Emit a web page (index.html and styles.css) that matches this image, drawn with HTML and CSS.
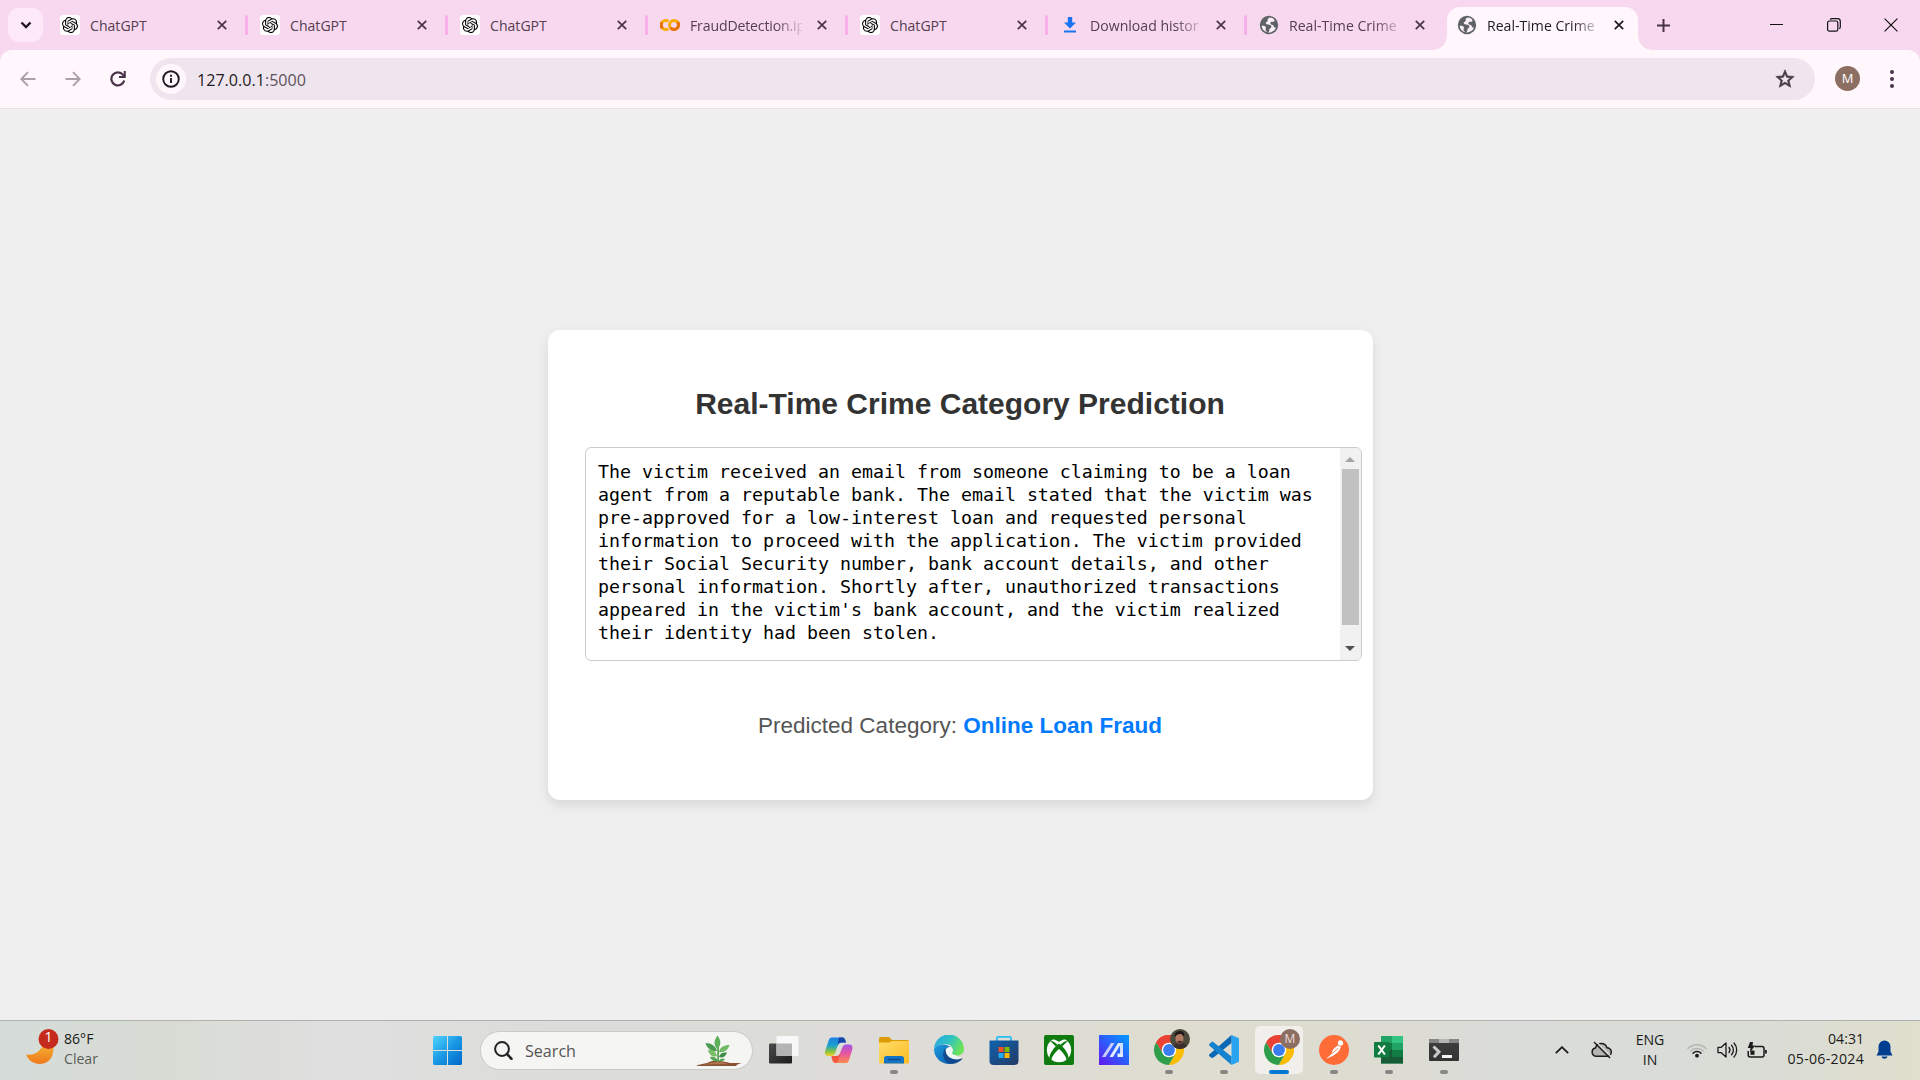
FILE: index.html
```html
<!DOCTYPE html>
<html lang="en">
<head>
<meta charset="utf-8">
<title>Real-Time Crime Category Prediction</title>
<link rel="stylesheet" href="styles.css">
</head>
<body>
<svg class="defs" width="0" height="0" aria-hidden="true">
  <defs>
    <linearGradient id="winG" x1="0" y1="0" x2="1" y2="1"><stop offset="0" stop-color="#4fd5fd"/><stop offset=".5" stop-color="#1a98e4"/><stop offset="1" stop-color="#0067c8"/></linearGradient>
    <linearGradient id="moonG" x1="0" y1="0" x2="0" y2="1"><stop offset="0" stop-color="#f3bb38"/><stop offset="1" stop-color="#ef7a1c"/></linearGradient>
    <linearGradient id="folderG" x1="0" y1="0" x2="1" y2="1"><stop offset="0" stop-color="#ffdc6b"/><stop offset="1" stop-color="#fcbc20"/></linearGradient>
    <linearGradient id="edgeTop" x1="0" y1="0" x2="1" y2=".4"><stop offset="0" stop-color="#2aa6e0"/><stop offset=".55" stop-color="#2fc3c4"/><stop offset="1" stop-color="#6be25c"/></linearGradient>
    <linearGradient id="edgeLow" x1="0" y1="0" x2="1" y2="1"><stop offset="0" stop-color="#1b9de2"/><stop offset="1" stop-color="#0d56a6"/></linearGradient>
    <linearGradient id="storeG" x1="0" y1="0" x2="1" y2="1"><stop offset="0" stop-color="#0f62ae"/><stop offset="1" stop-color="#253a66"/></linearGradient>
    <linearGradient id="asusG" x1="0" y1="1" x2="1" y2="0"><stop offset="0" stop-color="#6617ef"/><stop offset=".5" stop-color="#2c5cfb"/><stop offset="1" stop-color="#059cff"/></linearGradient>
    <linearGradient id="copA" x1="0" y1="0" x2="0" y2="1"><stop offset="0" stop-color="#1b7fe8"/><stop offset=".45" stop-color="#1ba3c8"/><stop offset=".75" stop-color="#84c341"/><stop offset="1" stop-color="#f5cf2b"/></linearGradient>
    <linearGradient id="copB" x1="0" y1="0" x2="0" y2="1"><stop offset="0" stop-color="#a553e5"/><stop offset=".5" stop-color="#e8579f"/><stop offset="1" stop-color="#fb8b4b"/></linearGradient>
    <linearGradient id="termG" x1="0" y1="0" x2="0" y2="1"><stop offset="0" stop-color="#3f3f3f"/><stop offset="1" stop-color="#333"/></linearGradient>
    <linearGradient id="viewG" x1="0" y1="0" x2="1" y2="1"><stop offset="0" stop-color="#4b4b4b"/><stop offset="1" stop-color="#1c1c1c"/></linearGradient>
  </defs>
  <symbol id="gpt" viewBox="0 0 24 24"><path d="M22.2819 9.8211a5.9847 5.9847 0 0 0-.5157-4.9108 6.0462 6.0462 0 0 0-6.5098-2.9A6.0651 6.0651 0 0 0 4.9807 4.1818a5.9847 5.9847 0 0 0-3.9977 2.9 6.0462 6.0462 0 0 0 .7427 7.0966 5.98 5.98 0 0 0 .511 4.9107 6.051 6.051 0 0 0 6.5146 2.9001A5.9847 5.9847 0 0 0 13.2599 24a6.0557 6.0557 0 0 0 5.7718-4.2058 5.9894 5.9894 0 0 0 3.9977-2.9001 6.0557 6.0557 0 0 0-.7475-7.0729zm-9.022 12.6081a4.4755 4.4755 0 0 1-2.8764-1.0408l.1419-.0804 4.7783-2.7582a.7948.7948 0 0 0 .3927-.6813v-6.7369l2.02 1.1686a.071.071 0 0 1 .038.052v5.5826a4.504 4.504 0 0 1-4.4945 4.4944zm-9.6607-4.1254a4.4708 4.4708 0 0 1-.5346-3.0137l.142.0852 4.783 2.7582a.7712.7712 0 0 0 .7806 0l5.8428-3.3685v2.3324a.0804.0804 0 0 1-.0332.0615L9.74 19.9502a4.4992 4.4992 0 0 1-6.1408-1.6464zM2.3408 7.8956a4.485 4.485 0 0 1 2.3655-1.9728V11.6a.7664.7664 0 0 0 .3879.6765l5.8144 3.3543-2.0201 1.1685a.0757.0757 0 0 1-.071 0l-4.8303-2.7865A4.504 4.504 0 0 1 2.3408 7.872zm16.5963 3.8558L13.1038 8.364 15.1192 7.2a.0757.0757 0 0 1 .071 0l4.8303 2.7913a4.4944 4.4944 0 0 1-.6765 8.1042v-5.6772a.79.79 0 0 0-.407-.667zm2.0107-3.0231l-.142-.0852-4.7735-2.7818a.7759.7759 0 0 0-.7854 0L9.409 9.2297V6.8974a.0662.0662 0 0 1 .0284-.0615l4.8303-2.7866a4.4992 4.4992 0 0 1 6.6802 4.66zM8.3065 12.863l-2.02-1.1638a.0804.0804 0 0 1-.038-.0567V6.0742a4.4992 4.4992 0 0 1 7.3757-3.4537l-.142.0805L8.704 5.459a.7948.7948 0 0 0-.3927.6813zm1.0976-2.3654l2.602-1.4998 2.6069 1.4998v2.9994l-2.5974 1.4997-2.6067-1.4997Z"/></symbol>
  <symbol id="x" viewBox="0 0 10 10"><path d="M.8.8 9.2 9.2M9.2.8.8 9.2" fill="none" stroke="currentColor" stroke-width="1.7"/></symbol>
  <symbol id="globe" viewBox="0 0 24 24"><path fill="#5f6368" d="M12 1a11 11 0 1 0 0 22 11 11 0 0 0 0-22z"/><path fill="#fbeff8" d="M13 3.1c-2 .6-3 1.8-2.600 3.300.4 1.300-.9 1.500-1.800 2.200-1 .8-.4 2.100.7 2.500 2.100.7 4.500.1 5.300 1.900.8 1.700-.5 2.600-1.500 3.300-.8.6-.5 2.200-1.100 3.600-.3.700-.9 1.100-1.500 1 4.600.6 8.400-1.800 9.900-5.500-1.500.2-2.800-.9-3-2.400-.2-1.300-1.700-1.200-2.800-1.700-1.600-.8-1-2.700.3-3.200 1.100-.4 2.300.2 3.200-.4.700-.5.200-1.700.2-2.400-1.300-1.200-3.200-2.100-5.300-2.200zM3.200 12.800c2.300-.1 4.500.3 5 1.900.4 1.400-.7 2.400-.2 3.700.3.900 1.400 1.100 1.500 2.200-3.400-1-6-4-6.300-7.800z"/></symbol>
  <symbol id="chrome" viewBox="0 0 30 30">
    <path fill="#ea4335" d="M2 7.500A15 15 0 0 1 28 7.500L15 8.200z"/>
    <path fill="#ea4335" d="M2 7.500 8.800 18.500 15 8H28.200A15 15 0 0 0 2 7.500z"/>
    <path fill="#fbbc04" d="M28 7.600A15 15 0 0 1 14.800 30L21.200 18.500 15 7.600z"/>
    <path fill="#2f9e4c" d="M2 7.500A15 15 0 0 0 14.800 30L21.300 18.600 9 18.600z"/>
    <circle cx="15" cy="15" r="7.300" fill="#fff"/><circle cx="15" cy="15" r="5.900" fill="#3b7df0"/>
  </symbol>
</svg>

<header class="browser">
  <div class="tabstrip">
    <button class="tabsearch"><svg width="12" height="8" viewBox="0 0 12 8"><path d="M1.500 1.500 6 6l4.500-4.500" fill="none" stroke="#1f1420" stroke-width="2.300"/></svg></button>
    <div class="tab"><span class="fav white"><svg width="16" height="16"><use href="#gpt"/></svg></span><span class="label">ChatGPT</span><svg class="close"><use href="#x"/></svg></div>
    <div class="tab"><span class="fav white"><svg width="16" height="16"><use href="#gpt"/></svg></span><span class="label">ChatGPT</span><svg class="close"><use href="#x"/></svg></div>
    <div class="tab"><span class="fav white"><svg width="16" height="16"><use href="#gpt"/></svg></span><span class="label">ChatGPT</span><svg class="close"><use href="#x"/></svg></div>
    <div class="tab"><span class="fav"><svg width="20" height="14" viewBox="0 0 20 14"><circle cx="14" cy="7" r="4.500" fill="none" stroke="#f9ab00" stroke-width="3"/><path d="M10.500 9.800A4.500 4.500 0 0 0 17.500 4" fill="none" stroke="#e8710a" stroke-width="3"/><path d="M8.300 3.300A4.500 4.500 0 1 0 8.300 10.700" fill="none" stroke="#f9ab00" stroke-width="3"/><path d="M2 4.500A4.500 4.500 0 0 0 2.500 10.200" fill="none" stroke="#e8710a" stroke-width="3"/></svg></span><span class="label fade late">FraudDetection.ip</span><svg class="close"><use href="#x"/></svg></div>
    <div class="tab"><span class="fav white"><svg width="16" height="16"><use href="#gpt"/></svg></span><span class="label">ChatGPT</span><svg class="close"><use href="#x"/></svg></div>
    <div class="tab slim"><span class="fav"><svg width="12" height="16" viewBox="0 0 12 16"><path fill="#1a73f0" d="M3.800 0h4.400v5.500H12L6 11.500 0 5.500h3.800zM0 13.500h12V15.500H0z"/></svg></span><span class="label fade">Download histor</span><svg class="close"><use href="#x"/></svg></div>
    <div class="tab slim last"><span class="fav"><svg width="20" height="20"><use href="#globe"/></svg></span><span class="label fade">Real-Time Crime</span><svg class="close"><use href="#x"/></svg></div>
    <div class="tab active"><span class="fav"><svg width="20" height="20"><use href="#globe"/></svg></span><span class="label fade">Real-Time Crime</span><svg class="close"><use href="#x"/></svg></div>
    <svg class="plus" width="13" height="13" viewBox="0 0 13 13"><path d="M6.500 0v13M0 6.500h13" stroke="#4a3349" stroke-width="2"/></svg>
    <div class="winctl">
      <svg width="14" height="14" viewBox="0 0 14 14"><path d="M0 6.500h13" stroke="#111" stroke-width="1"/></svg>
      <svg width="14" height="14" viewBox="0 0 14 14"><g fill="none" stroke="#111" stroke-width="1.200"><rect x=".6" y="3" width="10.200" height="10.200" rx="1.800"/><path d="M3.200 1.700C3.600 1 4.200.7 5 .7h5.500a2.800 2.800 0 0 1 2.800 2.800V9c0 .8-.4 1.400-1 1.800"/></g></svg>
      <svg width="14" height="14" viewBox="0 0 14 14"><path d="M.6.6 13.400 13.400M13.400.6.6 13.400" stroke="#111" stroke-width="1.200"/></svg>
    </div>
  </div>
  <div class="toolbar">
    <svg class="nav" width="16" height="16" viewBox="0 0 16 16"><path d="M15.500 8H1.500M8 1.200 1.300 8 8 14.800" fill="none" stroke="#aaa0a7" stroke-width="1.900"/></svg>
    <svg class="nav" width="16" height="16" viewBox="0 0 16 16"><path d="M.5 8h14M8 1.200 14.700 8 8 14.800" fill="none" stroke="#aaa0a7" stroke-width="1.900"/></svg>
    <svg class="nav" width="16" height="16" viewBox="0 0 16 16"><path d="M14.200 9.500A6.500 6.500 0 1 1 13 3.900L14.500 5.500" fill="none" stroke="#4a3349" stroke-width="2.200"/><path d="M15.800 0v7H9V5h4.700V0z" fill="#4a3349"/></svg>
    <div class="omnibox">
      <span class="info"><svg width="18" height="18" viewBox="0 0 18 18"><circle cx="9" cy="9" r="7.800" fill="none" stroke="#1f1a1f" stroke-width="1.900"/><path d="M9 8v5M9 4.800v2" stroke="#1f1a1f" stroke-width="1.900"/></svg></span>
      <span class="url">127.0.0.1<span>:5000</span></span>
      <svg class="star" width="22" height="22" viewBox="0 0 24 24"><path fill="#433943" d="M22 9.240l-7.190-.62L12 2 9.190 8.630 2 9.240l5.460 4.730L5.820 21 12 17.270 18.180 21l-1.630-7.030L22 9.240zM12 15.400l-3.760 2.270 1-4.280-3.320-2.880 4.380-.38L12 6.100l1.710 4.040 4.380.38-3.320 2.880 1 4.280L12 15.400z" stroke="#433943" stroke-width=".7"/></svg>
    </div>
    <span class="avatar">M</span>
    <svg width="6" height="20" viewBox="0 0 6 20"><g fill="#4a3349"><circle cx="3" cy="3" r="2"/><circle cx="3" cy="10" r="2"/><circle cx="3" cy="17" r="2"/></g></svg>
  </div>
</header>

<main class="page">
  <section class="card">
    <h1>Real-Time Crime Category Prediction</h1>
    <div class="textarea">
      <div class="text">The victim received an email from someone claiming to be a loan
agent from a reputable bank. The email stated that the victim was
pre-approved for a low-interest loan and requested personal
information to proceed with the application. The victim provided
their Social Security number, bank account details, and other
personal information. Shortly after, unauthorized transactions
appeared in the victim's bank account, and the victim realized
their identity had been stolen.</div>
      <div class="scrollbar">
        <svg width="10" height="5" viewBox="0 0 10 5"><path d="M0 5 5 0l5 5z" fill="#a3a3a3"/></svg>
        <div class="thumb"></div>
        <svg width="10" height="5" viewBox="0 0 10 5"><path d="M0 0h10L5 5z" fill="#505050"/></svg>
      </div>
    </div>
    <p class="result">Predicted Category: <strong>Online Loan Fraud</strong></p>
  </section>
</main>

<footer class="taskbar">
  <div class="weather">
    <svg width="34" height="38" viewBox="0 0 34 38"><path d="M0 26.500C9 28 17 22 18 12.500L27 18C29 27 23.500 36 14 36 7.500 36 2.500 32.500 0 26.500z" fill="url(#moonG)"/><circle cx="22.500" cy="11" r="10" fill="#c42b1c"/></svg>
    <span class="count">1</span>
    <div class="wtext"><span>86°F</span><span class="dim">Clear</span></div>
  </div>
  <svg class="start" width="29" height="29" viewBox="0 0 29 29"><path fill="url(#winG)" d="M1.500 0H14v14H0V1.500A1.500 1.500 0 0 1 1.500 0zM15 0h12.500A1.500 1.500 0 0 1 29 1.500V14H15zM0 15h14v14H1.500A1.500 1.500 0 0 1 0 27.500zM15 15h14v12.500a1.500 1.500 0 0 1-1.500 1.500H15z"/></svg>
  <div class="search">
    <svg width="19" height="19" viewBox="0 0 19 19"><circle cx="8" cy="8" r="6.900" fill="none" stroke="#222" stroke-width="2"/><path d="m13 13 4.500 4.800" stroke="#222" stroke-width="2.600" stroke-linecap="round"/></svg>
    <span>Search</span>
    <svg class="plant" width="47" height="32" viewBox="0 0 47 32"><path d="M0 31c3-2 8-2 11-3 4-2 8-3 12-2 4 0 7 1 11 2 4 0 8 0 12 0-3 1-5 1-6 3z" fill="#8a5336"/><path d="M8 29.500c4-.8 9-2.500 14-2.500s6 .8 10 2z" fill="#b07550"/><path d="M21.300 12V27h1.600V12z" fill="#4e9a45"/><path d="M21.500 14C17 10 18 5 21.500.5 25 5 25.500 10 21.500 14z" fill="#5fae5b"/><path d="M21 16C15 17 11 13 9.500 8 15 8 20 11 21 16z" fill="#4a9a50"/><path d="M23 17C24 12 28 10 33.500 10 32 15 28 18 23 17z" fill="#6dba62"/><path d="M21 21C16 23 13 19 12 15 17 14 20 17 21 21z" fill="#78bd68"/><path d="M23 22c1-4 4-5 8-4.500C30 21.500 26 23.500 23 22z" fill="#3f8d47"/><path d="M22 26c-4 1-7-1-8-4 4-1 7 1 8 4zM23 26c1-3 4-3 6-2-1 2-4 3-6 2z" fill="#56a655"/></svg>
  </div>
  <div class="apps">
    <div class="app"><svg width="30" height="30" viewBox="0 0 30 30"><rect x="0" y="8.500" width="23" height="20" rx="1" fill="url(#viewG)"/><rect x="7.500" y="1" width="22" height="20" rx="1" fill="#f8f8f8"/><path d="M7.500 8.500H23V21H7.500z" fill="#b4b4b4"/></svg></div>
    <div class="app"><svg width="30" height="30" viewBox="0 0 30 30"><path d="M8 2.500h10c3 0 3 2 4 5h-4c-3 0-4 2-5 5l-2 6c-1 2-2 2.500-4 2.500H4c-3 0-3.500-3-2.500-6L4.500 6C5.200 3.500 6 2.500 8 2.500z" fill="url(#copA)"/><path d="M15 2.500h3.500c2 0 2.700 2 3.500 5h-4c-2.500 0-3.500 1-4.500 3z" fill="#1c44a8"/><path d="M22.500 28H11.500c-2.500 0-3-2-4-6h4c3 0 4-2 5-5l2-5c1-2 2-2.500 4-2.500h3c3 0 3.500 3 2.500 6L25 25c-.7 2.300-1.500 3-2.500 3z" fill="url(#copB)"/><path d="M7.500 21H12c2.500 0 3.500-1 4.500-3L14 26c-.6 1.700-1.600 2-3 1.700C9 27 8.300 25 7.500 21z" fill="#f2553c"/></svg></div>
    <div class="app run"><svg width="30" height="30" viewBox="0 0 30 30"><path d="M0 4a2 2 0 0 1 2-2h8l3 3h15.500A1.500 1.500 0 0 1 30 6.500V12H0z" fill="#dc9b05"/><path d="M0 9.500V7.600h10L13 6h17v21a1.500 1.500 0 0 1-1.500 1.500h-27A1.500 1.500 0 0 1 0 27z" fill="url(#folderG)"/><path d="M5 28.500V23.500A2.500 2.500 0 0 1 7.500 21h15a2.500 2.500 0 0 1 2.500 2.500v5z" fill="#1573c5"/><path d="M9 24.500h12.500" stroke="#0a4b8e" stroke-width="1.300"/></svg></div>
    <div class="app"><svg width="30" height="30" viewBox="0 0 30 30"><path d="M0 15A15 15 0 0 1 30 14c0 4-3 6.500-7 6.500-3 0-5-1-5-2.500 0-1 1-1.300 1-3 0-3-3-6-8-6C5 9 1 12 0 15z" fill="url(#edgeTop)"/><path d="M0 15C1 11.500 5 9 10 9.500c4 .4 6 2.500 6 2.500-3 0-5.500 3-5.500 6 0 6 5 10.500 10.500 9.800A15 15 0 0 1 0 15z" fill="url(#edgeLow)"/><path d="M11 13.500c-3 4-2.500 10.500 2.500 14 3 2 7 1.500 10 0 2.500-1.300 4.300-3 5.300-4.600-7 3.500-15.500.5-16.800-6z" fill="#11498e"/><path d="M16.500 12c-3 .3-5.300 2.500-4.500 5 1.300 5.500 9 8.700 15.500 5.700-2.500 0-4.500-1.200-6-2.500-2.500-.3-3.700-1.200-3.500-2.200 1.300-1.500 1-4.300-1.500-6z" fill="#f0f5f6"/></svg></div>
    <div class="app"><svg width="30" height="30" viewBox="0 0 30 30"><path d="M8 6V3.200C8 2.300 8.500 1.800 9.400 1.800h11.200c.9 0 1.400.5 1.400 1.400V6" fill="none" stroke="#27bdf0" stroke-width="1.800"/><path d="M.5 5.500h29V26a4 4 0 0 1-4 4h-21a4 4 0 0 1-4-4z" fill="url(#storeG)"/><path fill="#f25022" d="M9.500 12h5v5h-5z"/><path fill="#7fba00" d="M15.500 12h5v5h-5z"/><path fill="#25aaf2" d="M9.500 18h5v5h-5z"/><path fill="#ffb900" d="M15.500 18h5v5h-5z"/></svg></div>
    <div class="app"><svg width="30" height="30" viewBox="0 0 30 30"><rect width="30" height="30" rx="2" fill="#107c10"/><circle cx="15" cy="15" r="12.200" fill="#fff"/><path d="M7.500 4C11 4 15 7 15 7s4-3 7.500-3L20 1H10zM15 8.500c5 3.500 10 10.500 9.500 15.200l-1.700 1.600C22 21 18 16.500 15 14c-3 2.500-7 7-7.800 11.300l-1.700-1.600C5 19 10 12 15 8.500z" fill="#107c10"/><path d="M6 6C8.500 5.500 12 8 13.500 9.800L11.800 11.500C9 8.500 7 7 6 6zM24 6C21.500 5.500 18 8 16.500 9.800l1.700 1.700C21 8.500 23 7 24 6z" fill="#107c10"/></svg></div>
    <div class="app"><svg width="30" height="30" viewBox="0 0 30 30"><path fill="url(#asusG)" d="M0 0h30v30H0z"/><path d="M3 22 12 8h3.500L6.500 22z" fill="#c7cdfb"/><path d="M10.500 22 19 8h3.500L14 22z" fill="#e3eaff"/><path d="M21 8h3v14h-3z" fill="#d2deff"/><path d="M18.500 18.500H24V22h-5.500z" fill="#e6efff"/></svg></div>
    <div class="app run"><svg width="30" height="30"><use href="#chrome"/></svg><span class="badge"><svg width="20" height="20" viewBox="0 0 20 20"><circle cx="10" cy="10" r="10" fill="#4c4b3b"/><path d="M4 18c0-4 3-5 6-5s6 2 7 4.200A10 10 0 0 1 4 18z" fill="#3a302e"/><ellipse cx="9.500" cy="9.500" rx="4" ry="5.500" fill="#b27a62"/><path d="M5 8C4 4 7 2 10 2s5 2 4 6c-1-2-2-3-4-3S6 6 5 8z" fill="#1f1a19"/><path d="M7 12.500c2-1 4-1 5.500 0-1 3-4.500 3-5.500 0z" fill="#503329"/></svg></span></div>
    <div class="app run"><svg width="30" height="30" viewBox="0 0 30 30"><path d="M22.500 0 30 3.300V26.700L22.500 30z" fill="#28a4f0"/><path d="M22.500 0v8L4.500 22.500 2.500 23 .3 21c-.5-.6-.4-1.300.2-1.800z" fill="#0d68b4"/><path d="M.5 10.800c-.6-.5-.6-1.200-.1-1.800L2.500 7c.6-.4 1.200-.4 1.800 0L22.500 21.500V30z" fill="#1583cf"/></svg></div>
    <div class="app run current"><svg width="30" height="30"><use href="#chrome"/></svg><span class="badge m">M</span></div>
    <div class="app run"><svg width="30" height="30" viewBox="0 0 30 30"><circle cx="15" cy="15" r="15" fill="#ff6c37"/><circle cx="21.500" cy="8" r="2.700" fill="#fff"/><path d="M19 10.500 22 12c-2 5-5 7-8.500 9L7 24l6-5.500c-.5-3 2.500-6 6-8z" fill="#fff"/><path d="m13 18.500 6.500-5.500" stroke="#ff6c37" stroke-width=".8"/></svg></div>
    <div class="app run"><svg width="30" height="30" viewBox="0 0 30 30"><path d="M7 1h22v27.500H7z" fill="#21a366"/><path d="M18 1h11v7H18z" fill="#33c481"/><path d="M7 8h11v7H7z" fill="#107c41"/><path d="M7 15h11v7h11v6.500H7z" fill="#185c37"/><path d="M18 15h11v7H18z" fill="#107c41"/><rect y="7" width="15.500" height="15.500" rx="1" fill="#107c41"/><path d="m4.300 10.500 6.600 9M10.900 10.500l-6.600 9" stroke="#fff" stroke-width="2.100"/></svg></div>
    <div class="app run"><svg width="30" height="30" viewBox="0 0 30 30"><rect y="4" width="30" height="22" rx="1" fill="url(#termG)"/><path d="M1 4h28a1 1 0 0 1 1 1v3H0V5a1 1 0 0 1 1-1z" fill="#858585"/><path d="M10 4h10v4H10z" fill="#b5b5b5"/><path d="m4.500 11.500 5.500 5.300-5 5.500" fill="none" stroke="#c9c9c9" stroke-width="3"/><path d="M13 20h10v3H13z" fill="#f2f2f2"/></svg></div>
  </div>
  <div class="tray">
    <svg class="chev" width="14" height="8" viewBox="0 0 14 8"><path d="M.8 7.200 7 1.200l6.200 6" fill="none" stroke="#1b1b1b" stroke-width="1.800"/></svg>
    <svg class="cloud" width="21" height="18" viewBox="0 0 21 18"><path d="M5 15.200a4.200 4.200 0 0 1-.5-8.300A6 6 0 0 1 16 6.800a4.200 4.200 0 0 1 .2 8.400z" fill="#b5b5b3" stroke="#1b1b1b" stroke-width="1.500"/><path d="m4.500 2 14.500 14.500" stroke="#dcded8" stroke-width="1.500" transform="translate(1 -1)"/><path d="m3 1 16 16" stroke="#1b1b1b" stroke-width="1.500"/></svg>
    <div class="lang"><span>ENG</span><span>IN</span></div>
    <svg class="wifi" width="20" height="16" viewBox="0 0 20 16"><g fill="none" stroke-width="1.500" stroke-linecap="round"><path d="M1 6.500a12.500 12.500 0 0 1 18 0M3.700 9a9 9 0 0 1 12.600 0" stroke="#b4b6b1"/><path d="M6 11.200a5.700 5.700 0 0 1 8 0" stroke="#1b1b1b"/></g><circle cx="10" cy="13.700" r="1.900" fill="#1b1b1b"/></svg>
    <svg class="vol" width="21" height="18" viewBox="0 0 21 18"><g fill="none" stroke="#1b1b1b" stroke-width="1.300" stroke-linejoin="round" stroke-linecap="round"><path d="M1 6.300h3.300L9 2v14l-4.700-4.300H1z"/><path d="M12 6.500a4 4 0 0 1 0 5M14.500 4.200a7 7 0 0 1 0 9.600M17 2a10.500 10.500 0 0 1 0 14"/></g></svg>
    <svg class="bat" width="21" height="17" viewBox="0 0 21 17"><path d="M7.500 4.500H15a2 2 0 0 1 2 2v6.500a2 2 0 0 1-2 2H3.200a2 2 0 0 1-2-2V9" fill="none" stroke="#1b1b1b" stroke-width="1.500"/><path d="M3.500 8.500h4v4.300h-4z" fill="#1b1b1b"/><path d="M3 0h3L5.500 3.500H8L3 10.500 3.500 6H.8z" fill="#1b1b1b"/><path d="M18 8h1.800v3.500H18z" fill="#1b1b1b"/></svg>
    <div class="clock"><span>04:31</span><span class="date">05-06-2024</span></div>
    <svg class="bell" width="17" height="20" viewBox="0 0 17 20"><path d="M8.500.5a6 6 0 0 1 6 6V11.500l2 4H.5l2-4V6.500a6 6 0 0 1 6-6zM5.500 16.500h6c-.5 3-5.500 3-6 0z" fill="#003e92"/></svg>
  </div>
</footer>
</body>
</html>
```
FILE: styles.css
```css
* { box-sizing: border-box; }
body {
  margin: 0;
  width: 1920px;
  height: 1080px;
  overflow: hidden;
  display: flex;
  flex-direction: column;
  background: #efefef;
  font-family: "Open Sans", "Noto Sans", sans-serif;
}
svg { display: block; flex: none; }
.defs { position: absolute; }

/* Browser chrome */
.browser { flex: none; height: 109px; background: #f7d8ef; }
.tabstrip { display: flex; height: 50px; align-items: center; padding-left: 8px; }
.tabsearch {
  width: 35px; height: 34px; margin: 0 5px 0 0; padding: 0;
  border: 0; border-radius: 11px; background: #fee9f8;
  display: flex; align-items: center; justify-content: center; flex: none;
}
.tab {
  position: relative; flex: none; width: 200px; height: 43px; margin-top: 7px;
  padding: 0 0 7px 12px; display: flex; align-items: center; color: #54404f;
}
.tab.slim { width: 199px; }
.tab::after { content: ""; position: absolute; right: 0; top: 8px; width: 3px; height: 20px; border-radius: 2px; background: #f7b0ec; }
.tab.last::after { display: none; }
.tab .fav { width: 20px; height: 20px; flex: none; display: flex; align-items: center; justify-content: center; margin-right: 10px; border-radius: 3px; }
.tab .fav.white { background: #fff; }
.tab .label { width: 112px; flex: none; padding-top: 2px; font-size: 14.1px; line-height: 20px; white-space: nowrap; }
.tab .fade { -webkit-mask-image: linear-gradient(90deg, #000 76%, transparent 104%); mask-image: linear-gradient(90deg, #000 76%, transparent 104%); }
.tab .late { letter-spacing: -.15px; }
.tab .close { width: 10px; height: 10px; margin-left: 15px; color: #4a3349; }
.tab.slim .close { margin-left: 14px; }
.tab.active { width: 191px; background: #fff7fb; border-radius: 13px 13px 0 0; color: #1f1a1f; padding-left: 10px; margin-left: 1px; }
.tab.active .close { color: #1f1a1f; }
.tab.active::before, .tab.active::after { content: ""; position: absolute; top: auto; bottom: 0; width: 14px; height: 14px; border-radius: 0; }
.tab.active::before { left: -14px; background: radial-gradient(circle at 0 0, transparent 13.5px, #fff7fb 14px); }
.tab.active::after { right: -14px; background: radial-gradient(circle at 100% 0, transparent 13.5px, #fff7fb 14px); }
.plus { margin-left: 19px; }
.winctl { display: flex; gap: 43px; margin-left: auto; padding-right: 22px; }

.toolbar {
  height: 59px; display: flex; align-items: center; padding: 0 25px 1px 20px;
  background: #fff7fb; border-radius: 12px 12px 0 0; border-bottom: 1px solid #e9dfe4;
}
.nav { margin-right: 29px; }
.omnibox { width: 1665px; height: 42px; margin-left: -5px; padding: 0 19px 0 6px; border-radius: 21px; background: #efe5ee; display: flex; align-items: center; flex: none; }
.info { width: 30px; height: 30px; border-radius: 50%; background: #fff7fb; display: flex; align-items: center; justify-content: center; }
.url { margin-left: 11px; padding-top: 2px; font-size: 16.1px; line-height: 24px; color: #1f1a1f; }
.url span { color: #5d525c; }
.star { margin-left: auto; }
.avatar { width: 25px; height: 25px; margin: 0 auto 0 20px; border-radius: 50%; background: #8d6e63; color: #fff; font-size: 13px; line-height: 25px; text-align: center; flex: none; }

/* Page */
.page { flex: 1; display: flex; align-items: center; justify-content: center; }
.card { width: 825px; height: 470px; padding: 56px 0 0 37px; margin-top: 1px; background: #fff; border-radius: 12px; box-shadow: 0 5px 12px rgba(0, 0, 0, .1); }
h1 { margin: 0 37px 0 0; text-align: center; color: #333; font: bold 30px/35px "Liberation Sans", Arial, sans-serif; }
.textarea { width: 777px; height: 214px; margin-top: 26px; border: 1px solid #ccc; border-radius: 6px; display: flex; overflow: hidden; }
.text { flex: 1; padding: 12px 0 0 12.5px; white-space: pre; color: #000; font: 18.27px/23px "DejaVu Sans Mono", "Liberation Mono", monospace; }
.scrollbar { width: 21px; background: #f1f1f1; display: flex; flex-direction: column; align-items: center; padding: 9px 0 9px; }
.thumb { width: 17px; height: 156px; margin: 7px 0 auto; background: #c1c1c1; }
.result { margin: 51px 37px 0 0; text-align: center; color: #555; font: 22.5px/28px "Liberation Sans", Arial, sans-serif; }
.result strong { color: #007bff; }

/* Taskbar */
.taskbar {
  flex: none; height: 60px; border-top: 1px solid #b1b1af; display: flex; align-items: center;
  background: linear-gradient(90deg, #d5dcd9 0, #d9dcd5 170px, #dfdfdf 340px, #dcdcda 560px, #dddcd8 900px, #dfddd0 1180px, #dddcd2 1380px, #dadcd9 1500px, #dadcd6 1760px, #e0dfcd 1920px);
  color: #1b1b1b;
}
.weather { position: relative; flex: none; width: 433px; padding-left: 26px; display: flex; align-items: center; height: 59px; padding-bottom: 3px; }
.weather > svg { margin-top: -5px; }
.count { position: absolute; left: 39px; top: 7px; width: 19px; text-align: center; color: #fff; font-size: 14px; line-height: 18px; }
.wtext { display: flex; flex-direction: column; margin-left: 4px; }
.wtext span, .lang span, .clock span { font-size: 14.1px; line-height: 20px; }
.wtext .dim { color: #5a5c59; }
.start { margin-right: 18px; flex: none; }
.search { width: 273px; height: 39px; flex: none; border-radius: 20px; background: #f5f5f3; border: 1px solid #c9c9c7; display: flex; align-items: center; padding: 0 9px 0 13px; }
.search span { margin-left: 12px; font-size: 16.1px; line-height: 24px; color: #555; }
.plant { margin-left: auto; }
.apps { display: flex; margin-left: 3.5px; flex: none; padding-bottom: 1px; }
.app { position: relative; width: 55px; height: 58px; display: flex; align-items: center; justify-content: center; }
.app.run::after { content: ""; position: absolute; bottom: 5px; left: 23.5px; width: 8px; height: 4px; border-radius: 2px; background: #868683; }
.app.current::before { content: ""; position: absolute; left: 3.5px; top: 5px; width: 48px; height: 48px; border-radius: 5px; background: #f0efeb; }
.app.current svg { position: relative; }
.app.current::after { left: 17.5px; width: 20px; background: #0078d4; }
.badge { position: absolute; left: 28.5px; top: 8px; width: 20px; height: 20px; border-radius: 50%; }
.badge.m { background: #8d6e63; color: #eadfdb; font-size: 12px; line-height: 20px; text-align: center; }
.tray { margin-left: auto; flex: none; display: flex; align-items: center; padding: 0 27px 1px 0; }
.cloud { margin-left: 22px; }
.lang { width: 40px; margin-left: 18px; display: flex; flex-direction: column; align-items: center; }
.wifi { margin-left: 17px; }
.vol { margin-left: 10px; }
.bat { margin-left: 9px; }
.clock { width: 80px; margin-left: 16px; padding-bottom: 2px; display: flex; flex-direction: column; align-items: flex-end; white-space: nowrap; }
.clock .date { letter-spacing: .3px; }
.bell { margin-left: 12px; }
```
